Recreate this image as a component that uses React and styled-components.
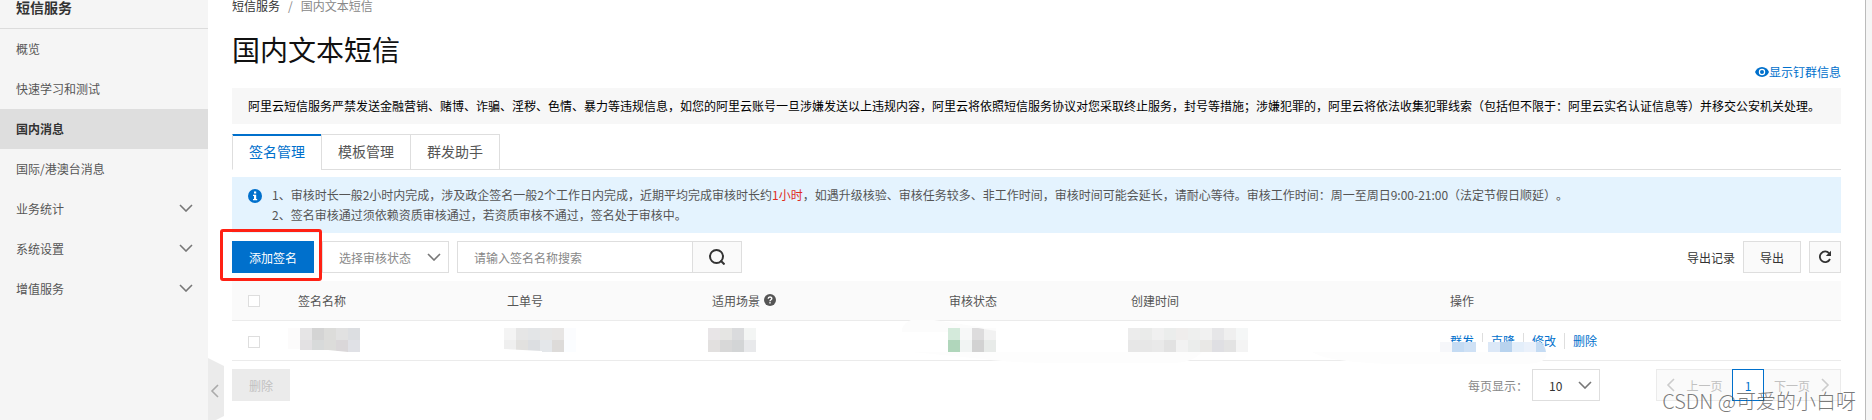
import React from "react";
import styled, { createGlobalStyle, css } from "styled-components";

const MENU = [
  { name: "概览" },
  { name: "快速学习和测试" },
  { name: "国内消息", active: true },
  { name: "国际/港澳台消息" },
  { name: "业务统计", more: true },
  { name: "系统设置", more: true },
  { name: "增值服务", more: true },
];

const TABS = ["签名管理", "模板管理", "群发助手"];

const ACTIONS = ["群发", "克隆", "修改", "删除"];

// hidden cell values, 12px blocks: x of the group and its two rows of colours
const BLOCKS = [
  {
    x: 68,
    rows: [
      ["#e6e5e6", "#d4d4d4", "#dcdcda", "#e1e1e1", "#dcdee1"],
      ["#e3e1e3", "#d8dada", "#dcdcda", "#dad7d9", "#e0e1e6"],
    ],
  },
  {
    x: 272,
    rows: [
      ["#f4f4f4", "#e6e6e6", "#e3e5e7", "#e6e6e6", "#e7e5e4", "#fbfcfe"],
      ["#efefef", "#e2e1df", "#dcdee1", "#e4e7ea", "#dddbd9", "#fbfdff"],
    ],
  },
  {
    x: 476,
    rows: [
      ["#e8e5e7", "#e5e5e3", "#dadbdd", "#f3f5f4"],
      ["#e2e0df", "#d8d8d8", "#d3d5d6", "#e8e9eb"],
    ],
  },
  {
    x: 716,
    rows: [
      ["#d4eadb", "#f7f8f8", "#dddcdd", "#f2f2f2"],
      ["#b0d6bb", "#f1f4f3", "#d2d2d2", "#e8ebe9"],
    ],
  },
  {
    x: 896,
    rows: [
      ["#ececec", "#eaebea", "#f0f0f0", "#ebedec", "#efedec", "#eeefee", "#f1f1f1", "#e6e6e8", "#efefef", "#f5f7f7"],
      ["#e7e7e7", "#e7e7e7", "#e9e9e9", "#e2e2e2", "#f2f2f2", "#ebedec", "#e9e8e6", "#dfdfe3", "#e3e3e3", "#f4f4f4"],
    ],
  },
];

const LINK_BLOCKS = ["#f6f7fa", "#c4dbf3", "#cfe1f5", "#ffffff", "#dce8f7", "#b8d3ee", "#e3eefa", "#eaf1fb"];

const Chevron = ({ points = "1,1 7,7 13,1", width = 14, height = 8, color = "#777" }) => (
  <svg width={width} height={height} fill="none" stroke={color} strokeWidth="1.6" aria-hidden="true">
    <polyline points={points} />
  </svg>
);

const LeftArrow = ({ color }) => <Chevron points="8,1 2,7 8,13" width={10} height={14} color={color} />;
const RightArrow = ({ color }) => <Chevron points="2,1 8,7 2,13" width={10} height={14} color={color} />;

const EyeIcon = () => (
  <svg width="14" height="10" viewBox="0 0 14 10" aria-hidden="true">
    <path d="M7 0C3.6 0 1.1 2.2 0 5c1.1 2.8 3.6 5 7 5s5.9-2.2 7-5c-1.1-2.8-3.6-5-7-5z" fill="#0070cc" />
    <circle cx="7" cy="5" r="3.2" fill="#fff" />
    <circle cx="7" cy="5" r="2" fill="#0070cc" />
  </svg>
);

const InfoIcon = () => (
  <svg width="14" height="14" viewBox="0 0 14 14" aria-hidden="true">
    <circle cx="7" cy="7" r="7" fill="#0070cc" />
    <rect x="6" y="2.5" width="2.2" height="2" fill="#fff" />
    <path d="M5 5.7h3.2v4.3h1v1.3H5V10h1V7H5z" fill="#fff" />
  </svg>
);

const HelpIcon = () => (
  <svg width="12" height="12" viewBox="0 0 12 12" aria-hidden="true">
    <circle cx="6" cy="6" r="6" fill="#555" />
    <path d="M4.2 4.8C4.2 2.5 7.8 2.5 7.8 4.6 7.8 5.8 6 5.8 6 7.2" fill="none" stroke="#fff" strokeWidth="1.4" />
    <rect x="5.3" y="8.1" width="1.4" height="1.4" fill="#fff" />
  </svg>
);

const SearchIcon = () => (
  <svg width="16" height="16" viewBox="0 0 16 16" fill="none" stroke="#333" strokeWidth="2" aria-hidden="true">
    <circle cx="7.5" cy="7.5" r="6.5" />
    <path d="M11.5 11.5L15.5 15.5" />
  </svg>
);

const RefreshIcon = () => (
  <svg width="14" height="14" viewBox="0 0 14 14" fill="none" aria-hidden="true">
    <path d="M11.2 3.3A5.3 5.3 0 1 0 12 9" stroke="#333" strokeWidth="1.8" />
    <path d="M13 0.8V6H7.8z" fill="#333" />
  </svg>
);

const RowMask = () => (
  <Mask aria-hidden="true">
    <rect x="56" y="8" width="12" height="21" fill="#fcfbfb" />
    <path d="M670 9C674 -3 690 -3 702 0L754 8V12H670z" fill="#fcfcfc" />
    <path d="M680 32H970Q960 43 940 43H830Q780 43 751 39z" fill="#fdfdfd" />
    <path d="M1080 32H1314Q1318 44 1290 44H1160Q1095 42 1080 32z" fill="#fdfdfd" />
    {BLOCKS.map((group) =>
      group.rows.map((row, r) =>
        row.map((color, i) => (
          <rect key={`${group.x}-${r}-${i}`} x={group.x + i * 12} y={8 + r * 12} width="12" height="12" fill={color} />
        ))
      )
    )}
    {/* brush edges that cut into the blocks */}
    <path d="M68 30L96 30L116 32H68z" fill="#fff" />
    <path d="M272 29L310 31V32H272z" fill="#fff" />
    <path d="M746 8L764 11V8z" fill="#fcfcfc" />
    {LINK_BLOCKS.map((color, i) => (
      <rect key={i} x={1208 + i * 12} y="22" width="12" height="10" fill={color} />
    ))}
    <path d="M1304 22H1308Q1313 25 1314 32H1304z" fill="#c4dbf3" />
  </Mask>
);

const App = () => {
  return (
    <>
      <GlobalStyle />
      <Page>
        <Sidebar>
          <SidebarTitle>短信服务</SidebarTitle>
          <nav>
            {MENU.map((item) => (
              <MenuLink href="#" key={item.name} $active={item.active}>
                {item.name}
                {item.more && <Chevron />}
              </MenuLink>
            ))}
          </nav>
          <Collapse aria-label="收起菜单">
            <LeftArrow color="#aaa" />
          </Collapse>
        </Sidebar>

        <Main>
          <Breadcrumb>
            <a href="#">短信服务</a>
            <span>/</span>
            <span>国内文本短信</span>
          </Breadcrumb>
          <Heading>
            <h1>国内文本短信</h1>
            <GroupLink href="#">
              <EyeIcon />
              显示钉群信息
            </GroupLink>
          </Heading>
          <Notice>
            阿里云短信服务严禁发送金融营销、赌博、诈骗、淫秽、色情、暴力等违规信息，如您的阿里云账号一旦涉嫌发送以上违规内容，阿里云将依照短信服务协议对您采取终止服务，封号等措施；涉嫌犯罪的，阿里云将依法收集犯罪线索（包括但不限于：阿里云实名认证信息等）并移交公安机关处理。
          </Notice>

          <Tabs role="tablist">
            {TABS.map((tab, i) => (
              <Tab key={tab} role="tab" aria-selected={i === 0} $active={i === 0}>
                {tab}
              </Tab>
            ))}
          </Tabs>

          <Tips>
            <InfoIcon />
            <div>
              <p>
                1、审核时长一般2小时内完成，涉及政企签名一般2个工作日内完成，近期平均完成审核时长约<em>1小时</em>，如遇升级核验、审核任务较多、非工作时间，审核时间可能会延长，请耐心等待。审核工作时间：周一至周日9:00-21:00（法定节假日顺延）。
              </p>
              <p>2、签名审核通过须依赖资质审核通过，若资质审核不通过，签名处于审核中。</p>
            </div>
          </Tips>

          <Toolbar>
            <Highlight>
              <Button $primary>添加签名</Button>
            </Highlight>
            <SelectBox $width={127} $muted>
              <select aria-label="选择审核状态">
                <option>选择审核状态</option>
              </select>
              <Chevron />
            </SelectBox>
            <Search>
              <input aria-label="签名名称" placeholder="请输入签名名称搜索" />
              <button aria-label="搜索">
                <SearchIcon />
              </button>
            </Search>
            <Spacer />
            <span>导出记录</span>
            <Button>导出</Button>
            <Button $square aria-label="刷新">
              <RefreshIcon />
            </Button>
          </Toolbar>

          <TableWrap>
            <Table>
              <colgroup>
                <Col $width={50} />
                <Col $width={209} />
                <Col $width={205} />
                <Col $width={237} />
                <Col $width={182} />
                <Col $width={319} />
                <Col />
              </colgroup>
              <thead>
                <tr>
                  <th>
                    <Checkbox aria-label="全选" />
                  </th>
                  <th>签名名称</th>
                  <th>工单号</th>
                  <th>
                    <WithIcon>
                      适用场景
                      <HelpIcon />
                    </WithIcon>
                  </th>
                  <th>审核状态</th>
                  <th>创建时间</th>
                  <th>操作</th>
                </tr>
              </thead>
              <tbody>
                <tr>
                  <td>
                    <Checkbox aria-label="选择签名" />
                  </td>
                  <td />
                  <td />
                  <td />
                  <td />
                  <td />
                  <td>
                    <Actions>
                      {ACTIONS.map((action) => (
                        <a href="#" key={action}>
                          {action}
                        </a>
                      ))}
                    </Actions>
                  </td>
                </tr>
              </tbody>
            </Table>
            <RowMask />
          </TableWrap>

          <Footer>
            <Button disabled>删除</Button>
            <Spacer />
            <label htmlFor="page-size">每页显示：</label>
            <SelectBox $width={68}>
              <select id="page-size">
                <option>10</option>
              </select>
              <Chevron />
            </SelectBox>
            <Pagination aria-label="分页">
              <PageButton disabled>
                <LeftArrow color="#ccc" />
                上一页
              </PageButton>
              <PageButton $current>1</PageButton>
              <PageButton disabled>
                下一页
                <RightArrow color="#ccc" />
              </PageButton>
            </Pagination>
          </Footer>
        </Main>

        <Rail />
        <Watermark>CSDN @可爱的小白呀</Watermark>
      </Page>
    </>
  );
};

export default App;

const GlobalStyle = createGlobalStyle`
* {
  box-sizing: border-box;
}
body {
  margin: 0;
  background: #fff;
  color: #333;
}
body, button, input, select {
  font-family: "Noto Sans CJK SC", "Open Sans", sans-serif;
  font-size: 12px;
}
h1, h2, p {
  margin: 0;
  font-weight: 400;
}
a {
  color: #0070cc;
  text-decoration: none;
}
`;

const Page = styled.div`
  position: relative;
  display: flex;
  min-height: 100vh;
  overflow: hidden;
`;

const Sidebar = styled.aside`
  position: relative;
  width: 208px;
  flex-shrink: 0;
  background: #f5f5f5;
`;

const SidebarTitle = styled.h2`
  height: 29px;
  padding-left: 16px;
  border-bottom: 1px solid #dcdcdc;
  font-size: 14px;
  font-weight: 700;
  line-height: 14px;
`;

const MenuLink = styled.a`
  display: flex;
  justify-content: space-between;
  align-items: center;
  height: 40px;
  padding: 0 15px 2px 16px;
  color: ${(p) => (p.$active ? "#333" : "#555")};
  font-weight: ${(p) => (p.$active ? 700 : 400)};
  background: ${(p) => (p.$active ? "#dedede" : "transparent")};
`;

const Collapse = styled.button`
  position: absolute;
  top: 358px;
  left: 100%;
  display: flex;
  align-items: center;
  width: 16px;
  height: 66px;
  padding: 0 2px;
  border: 0;
  background: #ebebeb;
  clip-path: polygon(0 0, 100% 8px, 100% 58px, 0 100%);
`;

const Main = styled.main`
  flex: 1;
  min-width: 0;
  padding: 0 24px;
`;

const Breadcrumb = styled.div`
  display: flex;
  gap: 8px;
  height: 16px;
  line-height: 12px;
  color: #888;
  a {
    color: #333;
  }
`;

const Heading = styled.div`
  display: flex;
  justify-content: space-between;
  align-items: flex-end;
  height: 72px;
  padding-bottom: 8px;
  h1 {
    align-self: flex-start;
    padding-top: 13px;
    font-size: 28px;
    line-height: 40px;
    color: #111;
  }
`;

const GroupLink = styled.a`
  display: flex;
  align-items: center;
  line-height: 16px;
`;

const Notice = styled.p`
  padding: 8px 16px;
  background: #f7f7f7;
  color: #000;
  line-height: 20px;
`;

const Tabs = styled.div`
  display: flex;
  margin-top: 10px;
  &::after {
    content: "";
    flex: 1;
    border-bottom: 1px solid #dedede;
    border-left: 1px solid #dedede;
  }
`;

const Tab = styled.button`
  height: 36px;
  padding: 0 16px 2px;
  border: solid #dedede;
  border-width: 1px 0 1px 1px;
  background: #fff;
  color: #555;
  font-size: 14px;
  ${(p) =>
    p.$active &&
    css`
      border-bottom-color: #fff;
      color: #0070cc;
      box-shadow: inset 0 1px #0070cc;
      border-top-color: #0070cc;
    `}
`;

const Tips = styled.div`
  display: flex;
  gap: 10px;
  margin-top: 7px;
  padding: 8px 16px;
  background: #e4f3fe;
  color: #555;
  line-height: 20px;
  text-spacing-trim: space-all;
  svg {
    flex-shrink: 0;
    margin-top: 4px;
  }
  em {
    color: #e02b1d;
    font-style: normal;
  }
`;

const Toolbar = styled.div`
  display: flex;
  align-items: center;
  gap: 8px;
  margin: 8px 0;
`;

const Spacer = styled.div`
  flex: 1;
`;

const Button = styled.button`
  display: flex;
  justify-content: center;
  align-items: center;
  height: 32px;
  width: ${(p) => (p.$square ? "32px" : "auto")};
  padding: ${(p) => (p.$square ? 0 : "0 16px")};
  border: 1px solid #dedede;
  background: #fafafa;
  color: #333;
  ${(p) =>
    p.$primary &&
    css`
      border-color: #0070cc;
      background: #0070cc;
      color: #fff;
    `}
  &:disabled {
    border-color: #ebebeb;
    background: #ebebeb;
    color: #c1c1c1;
  }
`;

const Highlight = styled.div`
  position: relative;
  &::after {
    content: "";
    position: absolute;
    inset: -12px -8px -8px -12px;
    border: 3px solid #ff2114;
    border-radius: 3px;
    pointer-events: none;
    z-index: 1;
  }
`;

const SelectBox = styled.div`
  position: relative;
  width: ${(p) => p.$width}px;
  select {
    width: 100%;
    height: 32px;
    padding: 0 16px;
    border: 1px solid #dedede;
    border-radius: 0;
    background: #fff;
    color: ${(p) => (p.$muted ? "#888" : "#333")};
    appearance: none;
  }
  svg {
    position: absolute;
    top: 12px;
    right: 8px;
    pointer-events: none;
  }
`;

const Search = styled.div`
  display: flex;
  width: 285px;
  height: 32px;
  border: 1px solid #dedede;
  input {
    flex: 1;
    min-width: 0;
    padding: 0 16px;
    border: 0;
  }
  input::placeholder {
    color: #888;
  }
  button {
    display: flex;
    justify-content: center;
    align-items: center;
    width: 49px;
    padding: 0;
    border: 0;
    border-left: 1px solid #dedede;
    background: #fafafa;
  }
`;

const TableWrap = styled.div`
  position: relative;
`;

const Table = styled.table`
  width: 100%;
  table-layout: fixed;
  border-spacing: 0;
  th,
  td {
    height: 40px;
    padding: 0 16px;
    border-bottom: 1px solid #ebebeb;
    text-align: left;
    font-weight: 400;
    color: #555;
  }
  th {
    padding-bottom: 1px;
    background: #fafafa;
  }
`;

const Col = styled.col`
  width: ${(p) => (p.$width ? `${p.$width}px` : "auto")};
`;

const Checkbox = styled.input.attrs({ type: "checkbox" })`
  display: block;
  width: 12px;
  height: 12px;
  margin: 2px 0 0;
  border: 1px solid #dedede;
  background: #fff;
  appearance: none;
`;

const WithIcon = styled.span`
  display: flex;
  align-items: center;
  gap: 4px;
`;

const Actions = styled.div`
  display: flex;
  line-height: 16px;
  a + a {
    margin-left: 8px;
    padding-left: 8px;
    border-left: 1px solid #dedede;
  }
`;

const Mask = styled.svg`
  position: absolute;
  top: 39px;
  left: 0;
  width: 100%;
  height: 46px;
  pointer-events: none;
`;

const Footer = styled.div`
  display: flex;
  align-items: center;
  margin-top: 8px;
  label {
    margin-right: 4px;
    color: #888;
  }
`;

const Pagination = styled.nav`
  display: flex;
  margin-left: 56px;
`;

const PageButton = styled.button`
  display: flex;
  justify-content: center;
  align-items: center;
  gap: 10px;
  width: ${(p) => (p.$current ? 32 : 76)}px;
  height: 32px;
  padding: 0;
  border: 1px solid ${(p) => (p.$current ? "#0070cc" : "#ebebeb")};
  background: ${(p) => (p.$current ? "#fff" : "#fafafa")};
  color: #0070cc;
  &:disabled {
    color: #c1c1c1;
  }
  &:first-child {
    border-right: 0;
  }
  &:last-child {
    width: 77px;
    border-left: 0;
  }
`;

const Rail = styled.div`
  width: 7px;
  border-left: 1px solid #bbb;
  background: #f5f5f5;
`;

const Watermark = styled.div`
  position: absolute;
  right: 16px;
  bottom: 5px;
  font-size: 20px;
  font-weight: 300;
  line-height: 28px;
  color: rgba(80, 80, 80, 0.75);
  pointer-events: none;
`;
